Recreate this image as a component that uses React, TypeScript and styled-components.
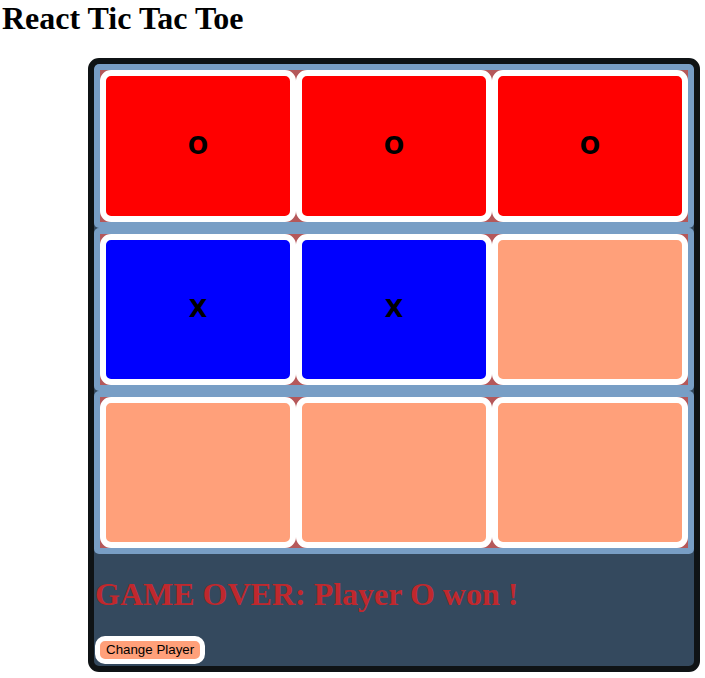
import React from "react";
import styled, { createGlobalStyle } from "styled-components";

const Global = createGlobalStyle`
  body {
    margin: 0;
    font-family: "Liberation Serif", "Times New Roman", serif;
    background: #ffffff;
  }
`;

const Title = styled.h1`
  margin: 0 0 21.44px 0;
  padding-left: 2px;
  font-size: 32px;
  font-weight: bold;
  color: #000;
`;

const Board = styled.div`
  margin-left: 88px;
  width: 600px;
  border: 6px solid #0f1315;
  border-radius: 11px;
  background: #34495e;
  overflow: hidden;
`;

const Row = styled.div`
  display: flex;
  box-sizing: border-box;
  height: 163.33px;
  padding: 6px;
  background: #789ec5;
  border-radius: 5px;
`;

const CellWrap = styled.div`
  width: 196px;
  height: 100%;
  background: #b5585a;
`;

const Square = styled.button<{ $fill: string }>`
  display: flex;
  align-items: center;
  justify-content: center;
  box-sizing: border-box;
  width: 100%;
  height: 100%;
  margin: 0;
  padding: 0;
  border: 6px solid #ffffff;
  border-radius: 11px;
  background: ${(p) => p.$fill};
  font-family: "DejaVu Sans", "Liberation Sans", Arial, sans-serif;
  font-weight: bold;
  font-size: 24px;
  color: #000;
`;

const Footer = styled.div`
  padding: 0 1px 2px 1px;
`;

const Status = styled.h1`
  margin: 22px 0 23px 0;
  font-size: 32px;
  font-weight: bold;
  color: #c0282d;
`;

const ChangeButton = styled.button`
  display: block;
  margin: 0;
  padding: 1px 6px;
  border: 5px solid #ffffff;
  border-radius: 10px;
  background: #ffa07a;
  font-family: "Liberation Sans", Arial, sans-serif;
  font-size: 13.33px;
  line-height: 16px;
  color: #000;
`;

const board: string[][] = [
  ["O", "O", "O"],
  ["X", "X", ""],
  ["", "", ""],
];

const fillFor = (v: string) =>
  v === "O" ? "#ff0000" : v === "X" ? "#0000ff" : "#ffa07a";

export default function App() {
  return (
    <>
      <Global />
      <Title>React Tic Tac Toe</Title>
      <Board>
        {board.map((row, r) => (
          <Row key={r}>
            {row.map((v, c) => (
              <CellWrap key={c}>
                <Square $fill={fillFor(v)}>{v}</Square>
              </CellWrap>
            ))}
          </Row>
        ))}
        <Footer>
          <Status>GAME OVER: Player O won !</Status>
          <ChangeButton>Change Player</ChangeButton>
        </Footer>
      </Board>
    </>
  );
}
